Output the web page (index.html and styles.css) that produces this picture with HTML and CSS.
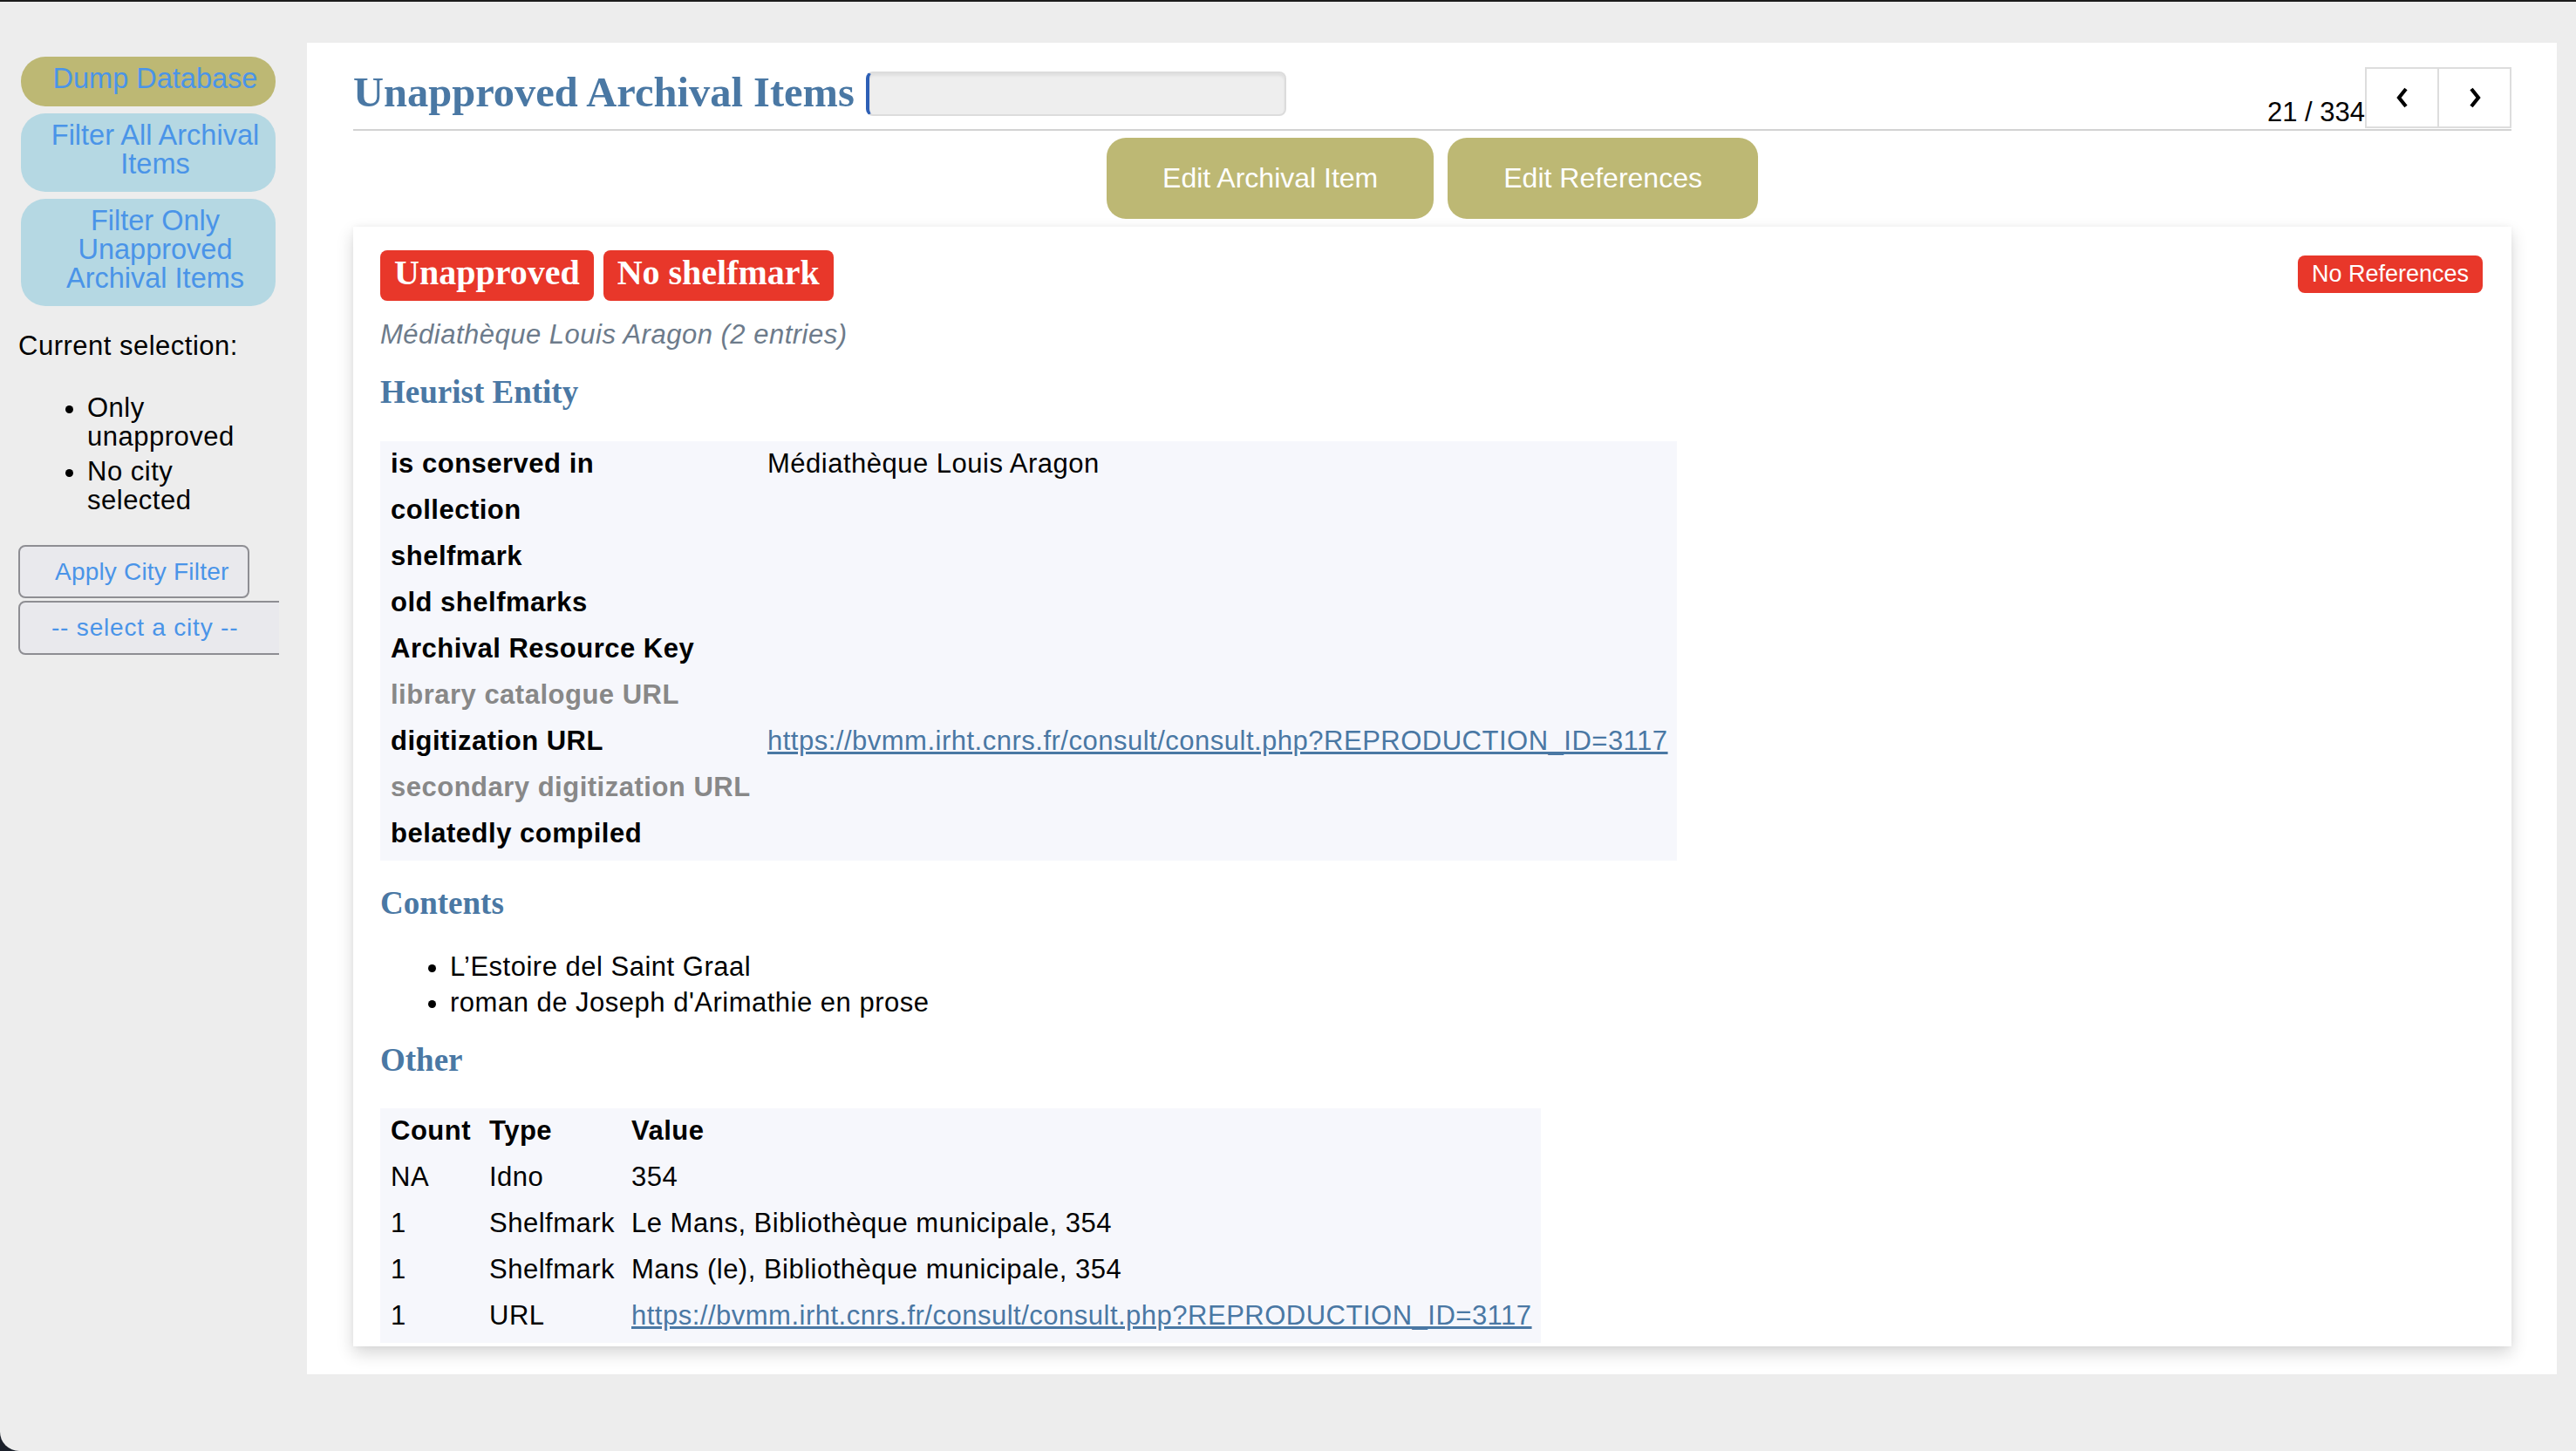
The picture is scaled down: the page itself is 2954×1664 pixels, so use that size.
FILE: index.html
```html
<!DOCTYPE html>
<html lang="en">
<head>
<meta charset="utf-8">
<title>Unapproved Archival Items</title>
<link rel="stylesheet" href="styles.css">
</head>
<body>
  <aside class="sidebar">
    <div class="side-btn dump">Dump Database</div>
    <div class="side-btn filter">Filter All Archival Items</div>
    <div class="side-btn filter">Filter Only Unapproved Archival Items</div>
    <div class="selection-label">Current selection:</div>
    <ul class="sel-list">
      <li>Only unapproved</li>
      <li>No city selected</li>
    </ul>
    <div class="apply">Apply City Filter</div>
    <div class="city">-- select a city --</div>
  </aside>

  <main class="main">
    <header class="header">
      <h2 class="title">Unapproved Archival Items</h2>
      <div class="search"></div>
      <div class="spacer"></div>
      <div class="counter">21 / 334</div>
      <div class="nav">
        <div class="nav-btn"><svg width="16" height="26" viewBox="0 0 16 26"><path d="M12 3 L4 13 L12 23" fill="none" stroke="#000" stroke-width="4.2"/></svg></div>
        <div class="nav-btn next"><svg width="16" height="26" viewBox="0 0 16 26"><path d="M4 3 L12 13 L4 23" fill="none" stroke="#000" stroke-width="4.2"/></svg></div>
      </div>
    </header>

    <div class="actions">
      <div class="act-btn">Edit Archival Item</div>
      <div class="act-btn">Edit References</div>
    </div>

    <section class="card">
      <div class="badge-row">
        <div class="badges">
          <span class="badge">Unapproved</span>
          <span class="badge">No shelfmark</span>
        </div>
        <span class="noref">No References</span>
      </div>
      <div class="subtitle">Médiathèque Louis Aragon (2 entries)</div>

      <h3 class="sec">Heurist Entity</h3>
      <table class="entity">
        <tr><td class="lbl">is conserved in</td><td>Médiathèque Louis Aragon</td></tr>
        <tr><td class="lbl">collection</td><td></td></tr>
        <tr><td class="lbl">shelfmark</td><td></td></tr>
        <tr><td class="lbl">old shelfmarks</td><td></td></tr>
        <tr><td class="lbl">Archival Resource Key</td><td></td></tr>
        <tr><td class="lbl muted">library catalogue URL</td><td></td></tr>
        <tr><td class="lbl">digitization URL</td><td><a href="#">https://bvmm.irht.cnrs.fr/consult/consult.php?REPRODUCTION_ID=3117</a></td></tr>
        <tr><td class="lbl muted">secondary digitization URL</td><td></td></tr>
        <tr><td class="lbl">belatedly compiled</td><td></td></tr>
      </table>

      <h3 class="sec">Contents</h3>
      <ul class="contents">
        <li>L’Estoire del Saint Graal</li>
        <li>roman de Joseph d'Arimathie en prose</li>
      </ul>

      <h3 class="sec">Other</h3>
      <table class="other">
        <tr><th class="c-count">Count</th><th class="c-type">Type</th><th>Value</th></tr>
        <tr><td>NA</td><td>Idno</td><td>354</td></tr>
        <tr><td>1</td><td>Shelfmark</td><td>Le Mans, Bibliothèque municipale, 354</td></tr>
        <tr><td>1</td><td>Shelfmark</td><td>Mans (le), Bibliothèque municipale, 354</td></tr>
        <tr><td>1</td><td>URL</td><td><a href="#">https://bvmm.irht.cnrs.fr/consult/consult.php?REPRODUCTION_ID=3117</a></td></tr>
      </table>
    </section>
  </main>
</body>
</html>
```

FILE: styles.css
```css
* { box-sizing: border-box; }

html { background: #1b202b; }

body {
  margin: 0;
  height: 1664px;
  background: #ededed;
  border-top: 2px solid #1c1c1c;
  border-bottom-left-radius: 22px;
  display: flex;
  align-items: flex-start;
  font-family: "Liberation Sans", Arial, sans-serif;
  font-size: 31px;
  letter-spacing: 0.5px;
  color: #000;
  overflow: hidden;
}

/* ---------- sidebar ---------- */
.sidebar {
  width: 320px;
  margin-right: 32px;
  flex: none;
  overflow: hidden;
  padding-left: 21px;
}

.side-btn {
  margin-left: 3px;
  width: 292px;
  border-radius: 28px;
  padding: 9px 4px 15px 20px;
  font-size: 32.5px;
  letter-spacing: 0;
  line-height: 33px;
  text-align: center;
  color: #4a94e8;
}
.side-btn.dump { margin-top: 63px; background: #bdb874; }
.side-btn.filter { margin-top: 8px; background: #b5d8e3; }

.selection-label { margin-top: 29px; line-height: 34px; }

.sel-list {
  margin: 37px 0 0;
  padding-left: 79px;
  line-height: 33px;
}
.sel-list li { margin-bottom: 7px; }
.sel-list li:last-child { margin-bottom: 0; }

.apply {
  margin-top: 35px;
  width: 265px;
  height: 61px;
  border: 2px solid #8e8e93;
  border-radius: 8px;
  background: #e9e9ed;
  font-size: 28px;
  letter-spacing: 0.2px;
  color: #4a94e8;
  display: flex;
  align-items: center;
  padding-left: 40px;
  white-space: nowrap;
}

.city {
  margin-top: 3px;
  width: 340px;
  height: 62px;
  border: 2px solid #8e8e93;
  border-radius: 8px;
  background: #e9e9ed;
  font-size: 28px;
  letter-spacing: 0.8px;
  color: #4a94e8;
  padding-left: 36px;
  display: flex;
  align-items: center;
  white-space: nowrap;
}

/* ---------- main ---------- */
.main {
  flex: none;
  width: 2580px;
  height: 1527px;
  margin-top: 47px;
  background: #fff;
  padding: 0 52px 0 53px;
}

.header {
  height: 101px;
  display: flex;
  align-items: flex-end;
  border-bottom: 2px solid #d3d3d3;
}

.title {
  margin: 0 0 12px;
  font-family: "Liberation Serif", "Times New Roman", serif;
  font-weight: bold;
  font-size: 48.5px;
  letter-spacing: 0;
  line-height: 60px;
  color: #4a78a4;
  white-space: nowrap;
}

.search {
  width: 482px;
  height: 51px;
  margin: 0 0 15px 13px;
  background: #eeeeee;
  border: 2px solid #dcdcdc;
  border-left: 4px solid #2d5fb5;
  border-radius: 8px;
  box-shadow: inset 0 3px 3px rgba(0,0,0,0.06);
}

.spacer { flex: 1; }

.counter {
  font-size: 31px;
  letter-spacing: 0;
  line-height: 34px;
  margin-bottom: 2px;
  white-space: nowrap;
}

.nav { display: flex; margin-bottom: 1px; }
.nav-btn {
  width: 85px;
  height: 70px;
  border: 2px solid #dddddd;
  background: #fff;
  display: flex;
  align-items: center;
  justify-content: center;
}
.nav-btn.next { margin-left: -2px; }

.actions {
  display: flex;
  justify-content: center;
  gap: 16px;
  margin-top: 8px;
}
.act-btn {
  height: 93px;
  padding: 0 64px;
  border-radius: 22px;
  background: #bdb874;
  color: #fff;
  font-size: 32px;
  letter-spacing: 0;
  display: flex;
  align-items: center;
  white-space: nowrap;
}

/* ---------- card ---------- */
.card {
  margin-top: 9px;
  background: #fff;
  padding: 27px 33px 4px 31px;
  box-shadow: 0 8px 18px rgba(0,0,0,0.16), 0 0 6px rgba(0,0,0,0.04);
}

.badge-row {
  display: flex;
  justify-content: space-between;
  align-items: flex-start;
}
.badges { display: flex; gap: 11px; }
.badge {
  height: 58px;
  padding: 0 16px 6px;
  border-radius: 8px;
  background: #e8372a;
  color: #fff;
  font-family: "Liberation Serif", "Times New Roman", serif;
  font-weight: bold;
  font-size: 40px;
  letter-spacing: 0;
  line-height: 52px;
  white-space: nowrap;
}
.noref {
  margin-top: 6px;
  height: 43px;
  padding: 0 16px;
  border-radius: 8px;
  background: #e8372a;
  color: #fff;
  font-size: 27px;
  letter-spacing: 0;
  line-height: 43px;
  white-space: nowrap;
}

.subtitle {
  margin-top: 22px;
  font-style: italic;
  line-height: 34px;
  color: #6d7b8b;
}

.sec {
  margin: 27px 0 33.5px;
  font-family: "Liberation Serif", "Times New Roman", serif;
  font-weight: bold;
  font-size: 37px;
  letter-spacing: 0;
  line-height: 44px;
  color: #4a78a4;
}

table {
  border-collapse: separate;
  border-spacing: 0;
  padding: 1px 0 3px;
  background: #f6f7fc;
  table-layout: fixed;
}
td, th {
  padding: 8px 12px 11px;
  line-height: 34px;
  text-align: left;
  vertical-align: top;
  white-space: nowrap;
}
th { font-weight: bold; }

.entity { width: 1487px; }
.entity .lbl { width: 432px; font-weight: bold; }
.entity .lbl.muted { color: #888888; }

.other { width: 1331px; }
.other .c-count { width: 113px; }
.other .c-type { width: 163px; }

a { color: #4a78a4; text-decoration: underline; }

.contents {
  margin: 34px 0 0;
  padding-left: 80px;
  line-height: 34px;
}
.contents li { margin-bottom: 7px; }
.contents li:last-child { margin-bottom: 0; }
```
